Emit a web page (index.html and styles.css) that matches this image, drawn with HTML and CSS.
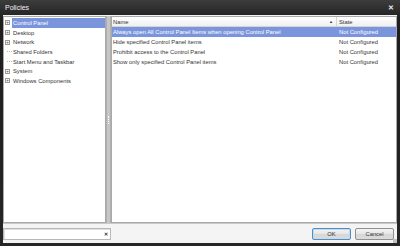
FILE: index.html
```html
<!DOCTYPE html>
<html lang="en">
<head>
  <meta charset="UTF-8">
  <title>Policies</title>
  <link rel="stylesheet" href="styles.css">
</head>
<body>
  <div class="window">
    <div class="titlebar">
      <span class="titlebar__text">Policies</span>
      <span class="titlebar__close">&#x2715;</span>
    </div>
    <div class="client">
      <div class="panes">
        <ul class="tree">
          <li class="tree__item tree__item--selected"><span class="tree__toggle">+</span><span class="tree__label">Control Panel</span></li>
          <li class="tree__item"><span class="tree__toggle">+</span><span class="tree__label">Desktop</span></li>
          <li class="tree__item"><span class="tree__toggle">+</span><span class="tree__label">Network</span></li>
          <li class="tree__item"><span class="tree__line"></span><span class="tree__label">Shared Folders</span></li>
          <li class="tree__item"><span class="tree__line"></span><span class="tree__label">Start Menu and Taskbar</span></li>
          <li class="tree__item"><span class="tree__toggle">+</span><span class="tree__label">System</span></li>
          <li class="tree__item"><span class="tree__toggle">+</span><span class="tree__label">Windows Components</span></li>
        </ul>
        <div class="splitter"><span class="splitter__grip"></span></div>
        <div class="list">
          <div class="list__head">
            <span class="list__col list__col--name">Name <span class="list__sort">&#9650;</span></span>
            <span class="list__col list__col--state">State</span>
          </div>
          <div class="list__row list__row--selected"><span class="list__col list__col--name">Always open All Control Panel Items when opening Control Panel</span><span class="list__col list__col--state">Not Configured</span></div>
          <div class="list__row"><span class="list__col list__col--name">Hide specified Control Panel items</span><span class="list__col list__col--state">Not Configured</span></div>
          <div class="list__row"><span class="list__col list__col--name">Prohibit access to the Control Panel</span><span class="list__col list__col--state">Not Configured</span></div>
          <div class="list__row"><span class="list__col list__col--name">Show only specified Control Panel items</span><span class="list__col list__col--state">Not Configured</span></div>
        </div>
      </div>
      <div class="footer">
        <div class="search"><span class="search__clear">&#x2715;</span></div>
        <div class="buttons">
          <button class="btn btn--default">OK</button>
          <button class="btn">Cancel</button>
        </div>
        <span class="grip"></span>
      </div>
    </div>
  </div>
</body>
</html>
```
FILE: styles.css
```css
* {
  box-sizing: border-box;
}
body {
  margin: 0;
  background: #262626;
  font-family: 'Liberation Sans', Arial, sans-serif;
  font-size: 5.8px;
  color: #333;
}
.window {
  width: 400px;
  height: 246px;
  display: flex;
  flex-direction: column;
  background: linear-gradient(#3c3c3c, #1e1e1e 20px, #262626);
}
.titlebar {
  height: 15px;
  display: flex;
  align-items: center;
  justify-content: space-between;
  padding: 0 6px 0 5px;
}
.titlebar__text {
  color: #f2f2f2;
  font-size: 7px;
}
.titlebar__close {
  color: #e8e8e8;
  font-size: 7px;
  font-weight: bold;
}
.client {
  flex: 1;
  margin: 0 3px 3px;
  background: #f4f4f4;
  display: flex;
  flex-direction: column;
  position: relative;
}
.panes {
  flex: 1;
  display: flex;
  padding-top: 1px;
  border-bottom: 1px solid #c9c9c9;
}
.tree {
  width: 103px;
  margin: 0;
  padding: 1px 0 0 0;
  list-style: none;
  background: #fff;
  border: 1px solid #a9a9a9;
}
.tree__item {
  height: 9.7px;
  display: flex;
  align-items: center;
  white-space: nowrap;
}
.tree__toggle {
  width: 5px;
  height: 5px;
  margin: 0 2px 0 1px;
  border: 1px solid #9a9a9a;
  font-size: 5px;
  line-height: 3px;
  text-align: center;
  color: #555;
}
.tree__line {
  width: 5px;
  height: 1px;
  margin-left: 3px;
  margin-right: 0;
  border-top: 1px dotted #bbb;
}
.tree__label {
  flex: 1;
  height: 100%;
  display: flex;
  align-items: center;
  padding-left: 1px;
}
.tree__item--selected .tree__label {
  background: #7b95dc;
  color: #fff;
}
.splitter {
  width: 5px;
  background: #c6c6c6;
  border-left: 1px solid #b0b0b0;
  border-right: 1px solid #b0b0b0;
  display: flex;
  align-items: center;
  justify-content: center;
}
.splitter__grip {
  width: 1px;
  height: 8px;
  border-left: 1px dotted #fff;
}
.list {
  flex: 1;
  background: #fff;
  border: 1px solid #a9a9a9;
}
.list__head {
  height: 10px;
  display: flex;
  align-items: center;
  background: linear-gradient(#fff, #f0f0f0);
  border-bottom: 1px solid #d5d5d5;
}
.list__head .list__col--name {
  border-right: 1px solid #d5d5d5;
  display: flex;
  justify-content: space-between;
  padding-right: 3px;
}
.list__sort {
  font-size: 4px;
}
.list__row {
  height: 10px;
  display: flex;
  align-items: center;
  white-space: nowrap;
}
.list__row--selected {
  background: #7b95dc;
  color: #fff;
}
.list__col {
  height: 100%;
  display: flex;
  align-items: center;
}
.list__col--name {
  width: 225px;
  padding-left: 1px;
  overflow: hidden;
}
.list__col--state {
  padding-left: 2px;
}
.footer {
  height: 19px;
  display: flex;
  align-items: center;
  justify-content: space-between;
  padding: 0 3px 0 0;
}
.search {
  width: 108px;
  height: 12px;
  background: #fff;
  border: 1px solid #b8b8b8;
  display: flex;
  align-items: center;
  justify-content: flex-end;
  padding-right: 2px;
  box-shadow: inset 1px 1px 0 #e0e0e0;
}
.search__clear {
  font-size: 5px;
  font-weight: bold;
  color: #333;
}
.buttons {
  display: flex;
  gap: 4px;
}
.btn {
  width: 39px;
  height: 12px;
  padding: 0;
  font-family: inherit;
  font-size: 5.8px;
  color: #333;
  border: 1px solid #8f8f8f;
  border-radius: 2px;
  background: linear-gradient(#f4f4f4, #e6e6e6 50%, #d6d6d6 51%, #dcdcdc);
}
.btn--default {
  border-color: #5a8ab8;
  box-shadow: inset 0 0 0 1px #b8dff5;
}
.grip {
  position: absolute;
  right: 0;
  bottom: 0;
  width: 4px;
  height: 4px;
  background: radial-gradient(circle, #888 0.6px, transparent 0.8px) 0 0 / 2px 2px;
}
```
